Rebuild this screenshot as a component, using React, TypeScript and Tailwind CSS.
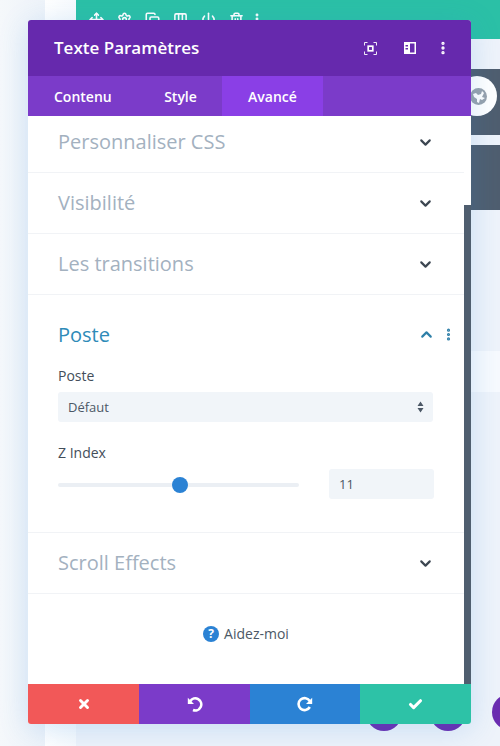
import React from "react";
import { ChevronDown, ChevronUp, EllipsisVertical, Move, Settings, Copy, Columns3, Power, Trash2, X, Check } from "lucide-react";

function Row({ title }: { title: string }) {
  return (
    <div className="h-[61px] border-b border-[#f1f3f6] flex items-center pl-[30px] pr-[30px] justify-between">
      <span className="text-[20px] text-[#a3b1bf] font-normal">{title}</span>
      <ChevronDown size={17} strokeWidth={3} className="text-[#3d4752]" />
    </div>
  );
}

export default function App() {
  return (
    <div className="relative w-[500px] h-[746px] overflow-hidden bg-[#eef3fa] font-['Open_Sans',sans-serif]">
      {/* page behind the modal */}
      <div className="flex h-full">
        <div className="w-[45px] bg-gradient-to-r from-[#f5f8fb] to-[#eef3f9]" />
        <div className="w-[31px] bg-gradient-to-r from-[#ffffff] to-[#f7fafd]" />
        <div className="flex-1 flex flex-col">
          <div className="h-[39px] bg-[#2bc0a6] flex items-start pl-[13px] pt-[12px] gap-[13px] text-white">
            <Move size={15} strokeWidth={2.5} />
            <Settings size={15} strokeWidth={2.5} />
            <Copy size={15} strokeWidth={2.5} />
            <Columns3 size={15} strokeWidth={2.5} />
            <Power size={15} strokeWidth={2.5} />
            <Trash2 size={15} strokeWidth={2.5} />
            <EllipsisVertical size={14} strokeWidth={3} className="-ml-[7px]" />
          </div>
          <div className="flex-1 flex flex-col items-end">
            <div className="h-[30px]" />
            <div className="w-[29px] h-[66px] bg-[#4f5e6f]" />
            <div className="h-[10px]" />
            <div className="w-[29px] h-[65px] bg-[#4f5e6f]" />
            <div className="h-[141px]" />
            <div className="w-[29px] h-[41px] bg-[#f7fafe]" />
          </div>
        </div>
      </div>

      {/* globe badge */}
      <div className="absolute left-[457px] top-[76px] w-[40px] h-[40px] rounded-full bg-white flex items-center justify-center">
        <svg width="17" height="17" viewBox="0 0 17 17" className="ml-[3px]">
          <circle cx="8.500" cy="8.500" r="8.500" fill="#98a2ad" />
          <path fill="#ffffff" d="M3 6l3-1 2 2 3-1 1-3 2 2-2 4 3 1-3 2-2-1-1 4-2-1 0-3-3-2z" />
        </svg>
      </div>

      {/* circles peeking out under the modal */}
      <div className="absolute left-[366px] top-[695px] w-[36px] h-[36px] rounded-full bg-[#6b2db0]" />
      <div className="absolute left-[430px] top-[695px] w-[36px] h-[36px] rounded-full bg-[#6b2db0]" />
      <div className="absolute left-[492px] top-[694px] w-[36px] h-[36px] rounded-full bg-[#6b2db0]" />

      {/* modal */}
      <div className="absolute left-[28px] top-[20px] w-[443px] h-[704px] rounded-[3px] overflow-hidden bg-white flex flex-col shadow-[0_5px_30px_rgba(43,135,218,0.2)]">
        <div className="h-[56px] shrink-0 bg-[#6629ad] flex items-center justify-between pl-[26px] pr-[20px]">
          <span className="text-[17px] font-semibold text-white">Texte Paramètres</span>
          <div className="flex items-center text-white">
            <svg width="13" height="13" viewBox="0 0 13 13" fill="none" className="mr-[27px]">
              <path d="M0.500 3.500V0.500h3M9.500 0.500h3v3M12.500 9.500v3h-3M3.500 12.500h-3v-3" stroke="currentColor" strokeWidth="0.9" />
              <rect x="4.200" y="4.200" width="4.600" height="4.600" stroke="currentColor" strokeWidth="1.700" />
            </svg>
            <svg width="12" height="12" viewBox="0 0 12 12" className="mr-[19px]">
              <path fill="currentColor" fillRule="evenodd" d="M0 0h12v12H0zM6 1.500V10.500h4.500V1.500zM1.500 3v1.500H4V3zM1.500 6v1.500H4V6z" />
            </svg>
            <EllipsisVertical size={16} strokeWidth={3} />
          </div>
        </div>
        <div className="h-[40px] shrink-0 bg-[#7b3bc9] flex text-[14px] font-semibold text-white">
          <div className="w-[111px] pl-[26px] flex items-center">Contenu</div>
          <div className="w-[83px] flex items-center justify-center">Style</div>
          <div className="w-[101px] bg-[#8a3fe6] flex items-center justify-center">Avancé</div>
        </div>

        <div className="flex-1 relative min-h-0">
          <div className="absolute right-0 top-[89px] bottom-0 w-[7px] bg-[#4f5e6f]" />
          <div className="pr-[7px]">
            <div className="h-[57px] border-b border-[#f1f3f6] flex items-center pl-[30px] pr-[30px] justify-between">
              <span className="text-[20px] text-[#a3b1bf] -mt-[5px]">Personnaliser CSS</span>
              <ChevronDown size={17} strokeWidth={3} className="text-[#3d4752] -mt-[3px]" />
            </div>
            <Row title="Visibilité" />
            <Row title="Les transitions" />

            <div className="h-[238px] border-b border-[#f1f3f6] pl-[30px] pr-[30px] pt-[25px]">
              <div className="flex items-center justify-between h-[29px]">
                <span className="text-[20px] text-[#2e8bb8]">Poste</span>
                <div className="flex items-center -mr-[22px]">
                  <ChevronUp size={17} strokeWidth={3} className="text-[#2e7fa8] mr-[6px]" />
                  <EllipsisVertical size={15} strokeWidth={3} className="text-[#2e7fa8]" />
                </div>
              </div>
              <div className="mt-[17px] text-[14px] font-medium text-[#434e5a] leading-[19px]">Poste</div>
              <div className="mt-[7px] h-[30px] w-[375px] rounded-[3px] bg-[#f1f5f9] flex items-center justify-between pl-[10px] pr-[9px]">
                <span className="text-[13px] font-medium text-[#4c5866] translate-y-[1px]">Défaut</span>
                <svg width="7" height="12" viewBox="0 0 7 12" fill="#4c5866">
                  <path d="M3.500 0.500L6.500 5H0.500zM0.500 7h6l-3 4.500z" />
                </svg>
              </div>
              <div className="mt-[21px] text-[14px] font-medium text-[#434e5a] leading-[19px]">Z Index</div>
              <div className="mt-[7px] flex items-center h-[30px]">
                <div className="relative w-[241px] h-[4px] rounded-full bg-[#ebeff4] translate-y-[1px]">
                  <div className="absolute left-[114px] -top-[6px] w-[16px] h-[16px] rounded-full bg-[#2b82d4]" />
                </div>
                <div className="ml-[30px] w-[105px] h-[30px] rounded-[3px] bg-[#f1f5f9] flex items-center pl-[10px] text-[13px] font-medium text-[#4c5866]">
                  <span className="translate-y-[1px]">11</span>
                </div>
              </div>
            </div>

            <Row title="Scroll Effects" />

            <div className="flex items-center justify-center gap-[5px] pt-[29px]">
              <span className="w-[16px] h-[16px] rounded-full bg-[#2b82d4] flex items-center justify-center text-white text-[12px] font-bold leading-none">?</span>
              <span className="text-[14px] font-medium text-[#4c5866]">Aidez-moi</span>
            </div>
          </div>
        </div>

        <div className="h-[40px] shrink-0 flex text-white">
          <div className="w-[111px] bg-[#f25858] flex items-center justify-center"><X size={14} strokeWidth={5} /></div>
          <div className="w-[111px] bg-[#7b3bc9] flex items-center justify-center">
            <svg width="16" height="16" viewBox="0 0 16 16" fill="none">
              <path d="M3.200 5.200A6 6 0 1 1 6 14" stroke="currentColor" strokeWidth="2.600" />
              <path fill="currentColor" d="M0.800 1.800V8H7z" />
            </svg>
          </div>
          <div className="w-[110px] bg-[#2b82d4] flex items-center justify-center">
            <svg width="16" height="16" viewBox="0 0 16 16" fill="none">
              <path d="M12.800 5.200A6 6 0 1 0 12.800 11" stroke="currentColor" strokeWidth="2.600" />
              <path fill="currentColor" d="M15.200 1.800V8H9z" />
            </svg>
          </div>
          <div className="w-[111px] bg-[#2dc2a7] flex items-center justify-center"><Check size={15} strokeWidth={5} /></div>
        </div>
      </div>
    </div>
  );
}
